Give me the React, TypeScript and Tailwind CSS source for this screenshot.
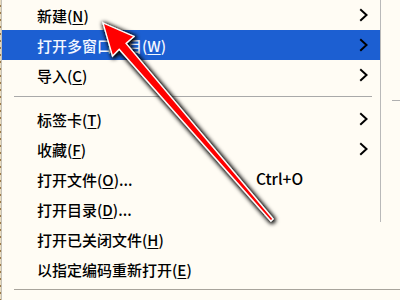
import React from "react";

type Item = { label: string; key: string; tail?: string; sub?: boolean; shortcut?: string; active?: boolean };

const group1: Item[] = [
  { label: "新建", key: "N", sub: true },
  { label: "打开多窗口项目", key: "W", sub: true, active: true },
  { label: "导入", key: "C", sub: true },
];
const group2: Item[] = [
  { label: "标签卡", key: "T", sub: true },
  { label: "收藏", key: "F", sub: true },
  { label: "打开文件", key: "O", tail: "...", shortcut: "Ctrl+O" },
  { label: "打开目录", key: "D", tail: "..." },
  { label: "打开已关闭文件", key: "H" },
  { label: "以指定编码重新打开", key: "E" },
];

function Chevron() {
  return (
    <svg width="10" height="14" viewBox="0 0 10 14" className="block">
      <polyline points="2,2 7.5,7 2,12" fill="none" stroke="#000" strokeWidth="2" strokeLinecap="square" />
    </svg>
  );
}

function Row({ it }: { it: Item }) {
  return (
    <div
      className={`h-[30px] flex items-center pl-[35px] pr-[11px] ${
        it.active ? "bg-[#1c5fd2] text-[#f4f7ff]" : "text-black"
      }`}
    >
      <span className="w-[219px] whitespace-nowrap">
        {it.label}(<span className="underline underline-offset-2">{it.key}</span>){it.tail ?? ""}
      </span>
      <span className="flex-1 whitespace-nowrap text-[15.5px]">{it.shortcut ?? ""}</span>
      <span className="w-[10px] flex justify-center">{it.sub ? <Chevron /> : null}</span>
    </div>
  );
}

export default function App() {
  return (
    <div
      className="relative w-[400px] h-[300px] overflow-hidden bg-[#fffcf4] text-[15px] leading-none font-medium"
      style={{ fontFamily: '"Noto Sans CJK SC", "Liberation Sans", sans-serif' }}
    >
      <div className="flex h-full">
        <div className="w-[2px] h-full flex">
          <div className="w-[1px] h-full bg-[repeating-linear-gradient(to_bottom,#e6d9bd_0px,#e6d9bd_5px,#9c7a48_5px,#9c7a48_7px)]" />
          <div className="w-[1px] h-full bg-[#c4c0b6]" />
        </div>
        <div className="flex-1 flex flex-col">
          <div className="flex">
            <div className="w-[378px] flex flex-col">
              {group1.map((it) => (
                <Row key={it.key} it={it} />
              ))}
              <div className="h-[14px] pt-[6px] pl-[12px] pr-[8px]">
                <div className="h-[1px] bg-[#a9a9a9]" />
              </div>
              {group2.map((it) => (
                <Row key={it.key} it={it} />
              ))}
            </div>
            <div className="flex-1">
              <div className="h-[222px] border-l border-[#b9b9b9] pt-[100px] pl-[11px]">
                <div className="h-[1px] bg-[#b0b0b0]" />
              </div>
            </div>
          </div>
          <div className="pt-[5px] pl-[12px]">
            <div className="h-[1px] bg-[#a8a49c]" />
          </div>
        </div>
      </div>

      <svg className="absolute inset-0 pointer-events-none" width="400" height="300" viewBox="0 0 400 300">
        <defs>
          <filter id="sh" x="-20%" y="-20%" width="140%" height="140%">
            <feMorphology in="SourceAlpha" operator="dilate" radius="1" result="d" />
            <feGaussianBlur in="d" stdDeviation="2.2" />
            <feComponentTransfer>
              <feFuncA type="linear" slope="1.1" />
            </feComponentTransfer>
            <feOffset dx="1" dy="1" result="b" />
            <feMerge>
              <feMergeNode in="b" />
              <feMergeNode in="SourceGraphic" />
            </feMerge>
          </filter>
        </defs>
        <polygon
          points="103,23 134,36.5 126,43.4 273.1,219 270.9,221 119.2,49.2 112.5,56"
          fill="#ff0000"
          stroke="#ffffff"
          strokeWidth="1.3"
          strokeLinejoin="miter"
          filter="url(#sh)"
        />
      </svg>
    </div>
  );
}
